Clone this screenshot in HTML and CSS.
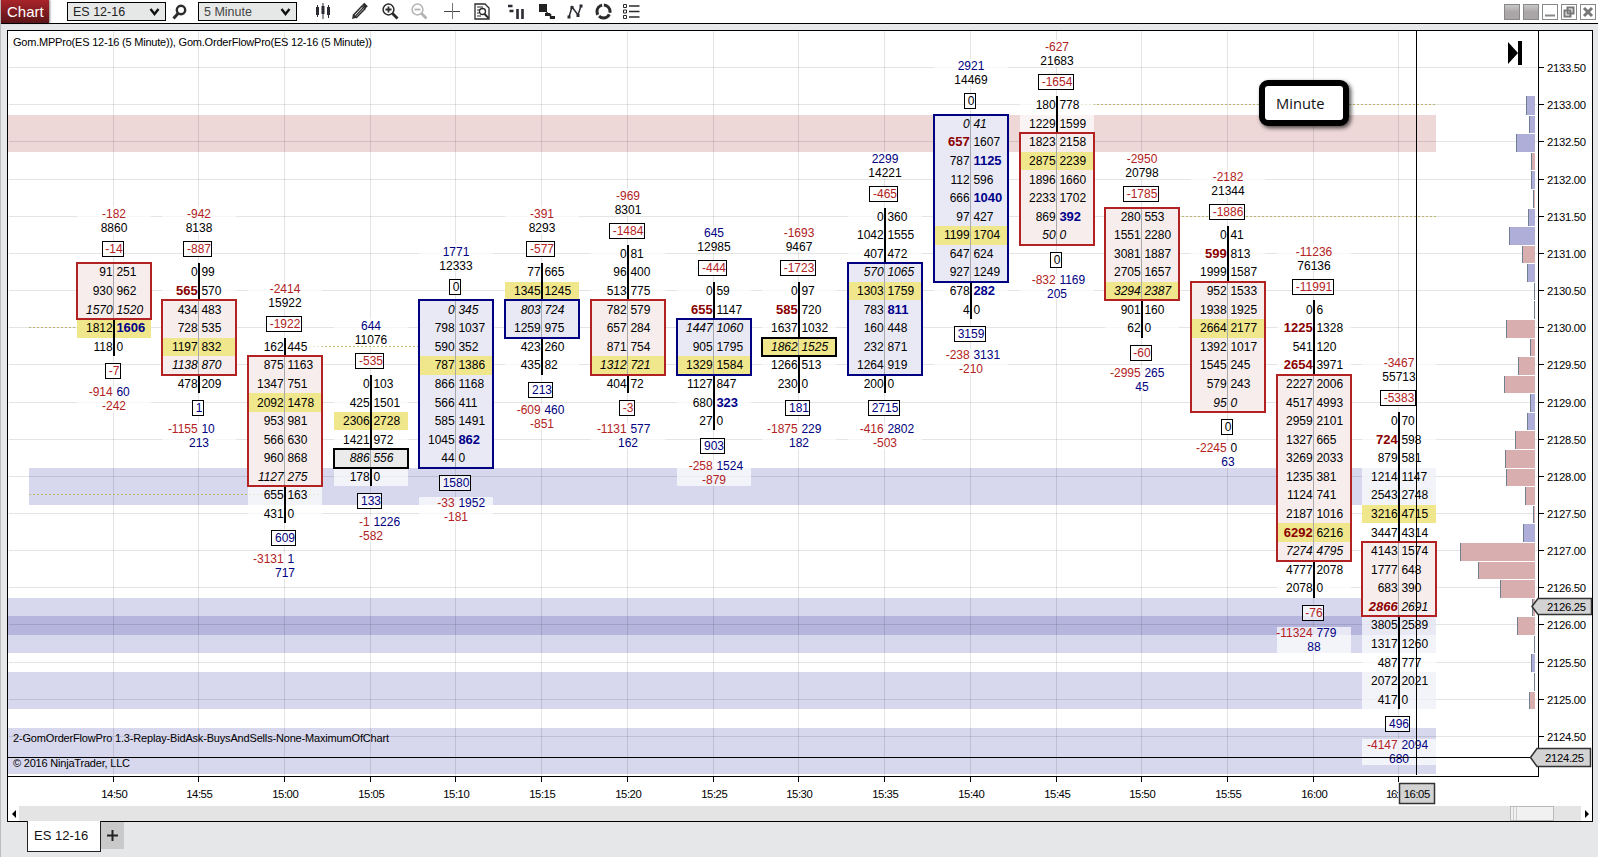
FILE: index.html
```html
<!DOCTYPE html>
<html lang="en">
<head>
<meta charset="utf-8">
<title>Chart - ES 12-16</title>
<link rel="stylesheet" href="styles.css">
</head>
<body>
<div class="window">
  <header class="toolbar">
    <div class="brand">Chart</div>
    <div class="select instrument"><span>ES 12-16</span><svg width="11" height="8" viewBox="0 0 11 8"><path d="M1.5 1l4 5 4-5" fill="none" stroke="#111" stroke-width="2.4"/></svg></div>
    <svg class="icon search" width="16" height="18" viewBox="0 0 16 18"><circle cx="9" cy="7" r="4.2" fill="none" stroke="#2b2b2b" stroke-width="2.4"/><path d="M6 10.5L1.5 15.5" stroke="#2b2b2b" stroke-width="3"/></svg>
    <div class="select interval"><span>5 Minute</span><svg width="11" height="8" viewBox="0 0 11 8"><path d="M1.5 1l4 5 4-5" fill="none" stroke="#111" stroke-width="2.4"/></svg></div>
    <div class="tools">
      <svg width="16" height="18" viewBox="0 0 16 18"><g fill="#2b2b33"><path d="M1 5h3v8H1zM6.500 4h3v8h-3zM12 5h3v8h-3z"/><path d="M2 3h1v12H2zM7.500 1h1v16h-1zM13 3h1v13h-1z"/></g></svg>
      <svg width="18" height="18" viewBox="0 0 18 18"><path d="M2.500 13l8.500-9 3 2.700-8.500 8.800z" fill="#fff" stroke="#2b2b2b" stroke-width="1.500"/><path d="M4.500 14l8-8.500" stroke="#2b2b2b" stroke-width="1.200"/><path d="M11 3l2.300-2.200 3.500 3.400-2.300 2.300z" fill="#2b2b2b"/><path d="M1 17l1-4.500 3.500 3.300z" fill="#2b2b2b"/></svg>
      <svg width="17" height="17" viewBox="0 0 17 17"><circle cx="6.500" cy="6.500" r="5.400" fill="none" stroke="#2b2b2b" stroke-width="1.500"/><path d="M3.500 6.500h6M6.500 3.500v6" stroke="#2b2b2b" stroke-width="1.800"/><path d="M10.500 10.500l5 5" stroke="#2b2b2b" stroke-width="2.800"/></svg>
      <svg width="17" height="17" viewBox="0 0 17 17"><circle cx="6.500" cy="6.500" r="5.400" fill="none" stroke="#b3b3b3" stroke-width="1.500"/><path d="M3.500 6.500h6" stroke="#b3b3b3" stroke-width="1.800"/><path d="M10.500 10.500l5 5" stroke="#b3b3b3" stroke-width="2.800"/></svg>
      <svg width="16" height="16" viewBox="0 0 16 16"><path d="M0 8.500h16" stroke="#444"/><path d="M8.500 0v16" stroke="#777"/></svg>
      <svg width="17" height="17" viewBox="0 0 17 17"><path d="M1 1h10l4 4v11H1z" fill="none" stroke="#2b2b2b" stroke-width="1.300"/><path d="M3 4h6M3 7h3M3 10h2M3 13h4" stroke="#2b2b2b"/><circle cx="8.500" cy="8.500" r="3" fill="#fff" stroke="#2b2b2b" stroke-width="1.300"/><path d="M10.500 11l4 4" stroke="#2b2b2b" stroke-width="2"/></svg>
      <svg width="17" height="17" viewBox="0 0 17 17"><path d="M0 3h4.500M1.500 8h4" stroke="#2b2b33" stroke-width="2.600"/><path d="M9.500 6v10M14.500 6v10" stroke="#2b2b33" stroke-width="2.600"/></svg>
      <svg width="17" height="17" viewBox="0 0 17 17"><path d="M0 1h8v8H0zM6 10h5v3H6zM11 13h5v3h-5z" fill="#222"/><path d="M8 9v2.500h3.500v3h3" fill="none" stroke="#222" stroke-width="1.500"/></svg>
      <svg width="17" height="17" viewBox="0 0 17 17"><path d="M2 14L5 4l6 8 3-9" fill="none" stroke="#2b2b33" stroke-width="1.500"/><path d="M.5 12.500h3v3h-3zM3.500 3h3v3h-3zM9.500 11h3v3h-3zM12.500 1.500h3v3h-3z" fill="#2b2b33"/></svg>
      <svg width="17" height="17" viewBox="0 0 17 17"><circle cx="8.500" cy="8.500" r="6.500" fill="none" stroke="#2b2b2b" stroke-width="3" stroke-dasharray="11.800 1.800" stroke-dashoffset="-3"/></svg>
      <svg width="17" height="17" viewBox="0 0 17 17"><path d="M.5 1.500h3v3h-3zM.5 7h3v3h-3zM.5 12.500h3v3h-3z" fill="none" stroke="#2b2b2b"/><path d="M6 3h10.500M6 8.500h10.500M6 14h10.500" stroke="#2b2b2b" stroke-width="1.600"/></svg>
    </div>
    <div class="controls">
      <i class="ctl solid"></i><i class="ctl solid"></i>
      <i class="ctl"><svg width="14" height="14" viewBox="0 0 14 14"><path d="M2 10.500h10" stroke="#888" stroke-width="2"/></svg></i>
      <i class="ctl"><svg width="14" height="14" viewBox="0 0 14 14"><path d="M5.500 2.500h6v6h-6zM2.500 5.500h6v6h-6z" fill="none" stroke="#777" stroke-width="2"/></svg></i>
      <i class="ctl"><svg width="14" height="14" viewBox="0 0 14 14"><path d="M3 3l8 8M11 3l-8 8" stroke="#777" stroke-width="3"/></svg></i>
    </div>
  </header>
  <main class="panel">
    <svg id="chart" class="chart" width="1584" height="775" viewBox="8 31 1584 775"></svg>
    <div class="scrollbar">
      <span class="arrow"><svg width="6" height="8" viewBox="0 0 6 8"><path d="M5 0v8L1 4z"/></svg></span>
      <span class="thumb"></span>
      <span class="arrow"><svg width="6" height="8" viewBox="0 0 6 8"><path d="M1 0v8l4-4z"/></svg></span>
    </div>
    <div class="callout">Minute</div>
  </main>
  <footer class="tabs">
    <div class="tab">ES 12-16</div>
    <div class="add"><svg width="11" height="11" viewBox="0 0 11 11"><path d="M0 5.500h11M5.500 0v11" stroke="#222" stroke-width="2"/></svg></div>
  </footer>
</div>
<script src="chart.js"></script>
</body>
</html>
```
FILE: styles.css
```css
* { box-sizing: border-box; }
body {
  margin: 0;
  background: #e6e7e9;
  font-family: "Liberation Sans", Arial, sans-serif;
  overflow: hidden;
}
.window {
  width: 1598px;
  height: 857px;
  display: flex;
  flex-direction: column;
  background: #e6e7e9;
  border-left: 1px solid #bcbcbe;
}
.toolbar {
  height: 24px;
  flex: none;
  display: flex;
  align-items: flex-start;
  background: #fff;
  border-bottom: 1px solid #000;
}
.brand {
  width: 48px;
  height: 23px;
  padding-left: 6px;
  color: #fff;
  font-size: 15px;
  line-height: 23px;
  background: linear-gradient(#a8242a, #5c1418);
  box-shadow: 1px 0 2px rgba(0, 0, 0, .5);
}
.select {
  width: 99px;
  height: 19px;
  margin-top: 2px;
  padding: 0 5px;
  display: flex;
  align-items: center;
  justify-content: space-between;
  border: 1px solid #000;
  background: #e6e8e7;
  font-size: 12.5px;
  color: #222;
}
.instrument { margin-left: 18px; }
.interval { margin-left: 10px; color: #444; }
.search { margin: 3px 0 0 6px; }
.tools {
  margin: 2px 0 0 18px;
  display: flex;
  align-items: center;
  height: 18px;
}
.tools svg { margin-right: 12.5px; flex: none; }
.tools svg:nth-child(1) { margin-right: 20px; }
.tools svg:nth-child(4) { margin-right: 16px; }
.tools svg:nth-child(5) { margin-right: 14px; }
.tools svg:nth-child(6) { margin-right: 17px; }
.tools svg:nth-child(7) { margin-right: 14px; }
.tools svg:nth-child(n+8) { margin-right: 11px; }
.controls {
  margin: 4px 2px 0 auto;
  display: flex;
  gap: 3px;
}
.ctl {
  width: 16px;
  height: 16px;
  border: 1px solid #888;
  background: #fff;
  display: block;
}
.ctl svg { display: block; }
.ctl.solid { background: linear-gradient(#c9c7c7, #aaa6a7 50%); }
.panel {
  position: relative;
  width: 1586px;
  height: 792px;
  margin: 6px 0 0 6px;
  flex: none;
  border: 1px solid #000;
  background: #fff;
}
.chart { display: block; }
.scrollbar {
  height: 15px;
  display: flex;
  background: #e4e4e4;
}
.arrow {
  width: 11px;
  background: #fff;
  display: flex;
  align-items: center;
  justify-content: center;
}
.thumb {
  width: 44px;
  margin: 0 27px 0 auto;
  border: 1px solid #bbb;
  background: linear-gradient(90deg, transparent 2px, #ccc 2px 3px, transparent 3px 5px, #ccc 5px 6px, transparent 6px), #f1f1f1;
}
.callout {
  position: absolute;
  left: 1251px;
  top: 49px;
  width: 90px;
  height: 46px;
  border: 6px solid #000;
  border-radius: 9px;
  background: #fff;
  box-shadow: 2px 2px 4px rgba(0, 0, 0, .7);
  font: 14.7px/34px "Open Sans", "Noto Sans", sans-serif;
  padding-left: 11px;
  color: #111;
}
.tabs {
  display: flex;
  margin: -1px 0 0 26px;
  position: relative;
}
.tab {
  width: 74px;
  height: 31px;
  border: 1px solid #222;
  border-top: 0;
  background: #fff;
  padding-left: 6px;
  font-size: 13px;
  line-height: 29px;
  color: #111;
}
.add {
  width: 23px;
  height: 27px;
  margin-top: 1px;
  background: #c9c9c9;
  display: flex;
  align-items: center;
  justify-content: center;
}
.grid { stroke: rgba(0, 0, 0, .105); stroke-width: 1; }
.frame { stroke: #000; stroke-width: 1; fill: none; }
.supply { fill: rgba(139, 0, 0, .157); }
.demand { fill: rgba(0, 0, 139, .157); }
.level { stroke: #bdb76b; stroke-width: 1; stroke-dasharray: 2 2; }
.veil { fill: rgba(255, 255, 255, .7); }
.poc { fill: #f0e68c; }
.wick { fill: #000; }
.spine { fill: #a9a9a9; }
.body { stroke-width: 2; fill: none; }
.body.r { stroke: #b22222; }
.body.b { stroke: #000080; }
.body.k { stroke: #000; }
.fill.r { fill: #f7edec; }
.fill.b { fill: #e9e9f5; }
.fill.k { fill: #ebebeb; }
.tagbox { stroke: #000; stroke-width: 1; fill: rgba(255, 255, 255, .7); }
.chart text { font-size: 12px; fill: #000; }
.chart text.end { text-anchor: end; }
.chart text.mid { text-anchor: middle; }
.chart text.it { font-style: italic; }
.chart text.neg { fill: #b22222; }
.chart text.pos { fill: #000080; }
.chart text.sell { font-weight: bold; font-size: 13px; fill: #8b0000; }
.chart text.buy { font-weight: bold; font-size: 13px; fill: #00008b; }
.chart text.axis { font-size: 11.3px; }
.chart text.note { font-size: 11px; }
.profile.r { fill: #d9aeaf; }
.profile.b { fill: #afaed9; }
.profile-edge { fill: #708090; }
.marker { fill: #d3d3d3; stroke: #333; stroke-width: 1.500; }
```
FILE: chart.js
```js
const NS = 'http://www.w3.org/2000/svg';
const chart = document.getElementById('chart');
const STEP = 18.58;
const yOf = i => 68.07 + i * STEP;
const topOf = i => Math.round(yOf(i) - 9.2);

function add(tag, cls, attrs, text) {
  const e = document.createElementNS(NS, tag);
  if (cls) e.setAttribute('class', cls);
  for (const k in attrs) e.setAttribute(k, attrs[k]);
  if (text !== undefined) e.textContent = text;
  chart.appendChild(e);
  return e;
}
const rect = (cls, x, y, w, h) => add('rect', cls, { x, y, width: w, height: h });
const line = (cls, x1, y1, x2, y2) => add('line', cls, { x1, y1, x2, y2 });
const label = (cls, x, y, s, extra) => add('text', cls, Object.assign({ x, y }, extra), s);
const tone = v => (v[0] === '-' ? ' neg' : v === '0' ? '' : ' pos');

/* px, time, first row, delta, volume, upper tag, rows, body [from, to, colour], poc row, lower tag, min, max, net
   cell prefixes: * strong imbalance, / italic */
const bars = [
  [113, '14:50', 11, '-182', '8860', '-14', '91 251,930 962,/1570 /1520,1812 *1606,118 0', [0, 2, 'r'], 3, '-7', '-914', '60', '-242'],
  [198, '14:55', 11, '-942', '8138', '-887', '0 99,*565 570,434 483,728 535,1197 832,/1138 /870,478 209', [2, 5, 'r'], 4, '1', '-1155', '10', '213'],
  [284, '15:00', 15, '-2414', '15922', '-1922', '162 445,875 1163,1347 751,2092 1478,953 981,566 630,960 868,/1127 /275,655 163,431 0', [1, 7, 'r'], 3, '609', '-3131', '1', '717'],
  [370, '15:05', 17, '644', '11076', '-535', '0 103,425 1501,2306 2728,1421 972,/886 /556,178 0', [4, 4, 'k'], 2, '133', '-1', '1226', '-582'],
  [455, '15:10', 13, '1771', '12333', '0', '/0 /345,798 1037,590 352,787 1386,866 1168,566 411,585 1491,1045 *862,44 0', [0, 8, 'b'], 3, '1580', '-33', '1952', '-181'],
  [541, '15:15', 11, '-391', '8293', '-577', '77 665,1345 1245,/803 /724,1259 975,423 260,435 82', [2, 3, 'b'], 1, '213', '-609', '460', '-851'],
  [627, '15:20', 10, '-969', '8301', '-1484', '0 81,96 400,513 775,782 579,657 284,871 754,/1312 /721,404 72', [3, 6, 'r'], 6, '-3', '-1131', '577', '162'],
  [713, '15:25', 12, '645', '12985', '-444', '0 59,*655 1147,/1447 /1060,905 1795,1329 1584,1127 847,680 *323,27 0', [2, 4, 'b'], 4, '903', '-258', '1524', '-879'],
  [798, '15:30', 12, '-1693', '9467', '-1723', '0 97,*585 720,1637 1032,/1862 /1525,1266 513,230 0', [3, 3, 'k'], 3, '181', '-1875', '229', '182'],
  [884, '15:35', 8, '2299', '14221', '-465', '0 360,1042 1555,407 472,/570 /1065,1303 1759,783 *811,160 448,232 871,1264 919,200 0', [3, 8, 'b'], 4, '2715', '-416', '2802', '-503'],
  [970, '15:40', 3, '2921', '14469', '0', '/0 /41,*657 1607,787 *1125,112 596,666 *1040,97 427,1199 1704,647 624,927 1249,678 *282,4 0', [0, 8, 'b'], 6, '3159', '-238', '3131', '-210'],
  [1056, '15:45', 2, '-627', '21683', '-1654', '180 778,1229 1599,1823 2158,2875 2239,1896 1660,2233 1702,869 *392,/50 /0', [2, 7, 'r'], 3, '0', '-832', '1169', '205'],
  [1141, '15:50', 8, '-2950', '20798', '-1785', '280 553,1551 2280,3081 1887,2705 1657,/3294 /2387,901 160,62 0', [0, 4, 'r'], 4, '-60', '-2995', '265', '45'],
  [1227, '15:55', 9, '-2182', '21344', '-1886', '0 41,*599 813,1999 1587,952 1533,1938 1925,2664 2177,1392 1017,1545 245,579 243,/95 /0', [3, 9, 'r'], 5, '0', '-2245', '0', '63'],
  [1313, '16:00', 13, '-11236', '76136', '-11991', '0 6,*1225 1328,541 120,*2654 3971,2227 2006,4517 4993,2959 2101,1327 665,3269 2033,1235 381,1124 741,2187 1016,*6292 6216,/7274 /4795,4777 2078,2078 0', [4, 13, 'r'], 12, '-76', '-11324', '779', '88'],
  [1398, '16:', 19, '-3467', '55713', '-5383', '0 70,*724 598,879 581,1214 1147,2543 2748,3216 4715,3447 4314,4143 1574,1777 648,683 390,*/2866 /2691,3805 2589,1317 1260,487 777,2072 2021,417 0', [7, 10, 'r'], 5, '496', '-4147', '2094', '680']
];

/* zones, grid and price levels */
rect('supply', 8, 115, 1428, 37);
rect('demand', 29, 468, 1407, 37);
rect('demand', 8, 598, 1428, 55);
rect('demand', 8, 616, 1428, 19);
rect('demand', 8, 672, 1428, 37);
rect('demand', 8, 728, 1428, 46);
for (let i = 0; i <= 36; i += 2) line('grid', 9, Math.round(yOf(i)) - .5, 1537, Math.round(yOf(i)) - .5);
bars.forEach(b => line('grid', b[0] + .5, 31, b[0] + .5, 776));
line('level', 29, 327.5, 77, 327.5);
line('level', 309, 346.500, 419, 346.500);
line('level', 29, 494.500, 322, 494.500);
line('level', 1081, 104.500, 1436, 104.500);
line('level', 1182, 216.500, 1436, 216.500);

function cell(raw, x, y, side) {
  let cls = side === 'l' ? 'end' : '';
  if (raw.includes('*')) cls += side === 'l' ? ' sell' : ' buy';
  if (raw.includes('/')) cls += ' it';
  label(cls, x, y, raw.replace(/[*/]/g, ''));
}
function tag(v, cx, y) {
  const w = [...v].reduce((n, c) => n + (c === '-' ? 4 : 6.67), 0);
  rect('tagbox', Math.round(cx - w / 2 - 3.600) + .5, Math.round(y - 8) + .5, Math.round(w + 4), 15);
  label('mid' + tone(v), cx, Math.round(y + 4), v);
}

bars.forEach(([px, time, first, delta, vol, upper, rowText, body, poc, lower, min, max, net]) => {
  const rows = rowText.split(',').map(r => r.split(' '));
  const x = px - 36, cx = px + 1;
  const y0 = yOf(first), yN = yOf(first + rows.length - 1);
  const top = topOf(first), bottom = topOf(first + rows.length);
  rect('veil', x, top - 56, 74, 27);
  rect('veil', x, top, 74, bottom - top);
  rect('veil', x, Math.round(yN + 39), 74, 26);
  const bt = topOf(first + body[0]), bb = topOf(first + body[1] + 1);
  rect('fill ' + body[2], x, bt, 74, bb - bt);
  rect('poc', x, topOf(first + poc), 74, topOf(first + poc + 1) - topOf(first + poc));
  if (bt > top) rect('wick', px, top, 2, bt - top);
  if (bottom > bb) rect('wick', px, bb, 2, bottom - bb);
  rect('spine', px, bt, 1, bb - bt);
  rect('body ' + body[2], x, bt, 74, bb - bt);
  rows.forEach(([l, r], i) => {
    const y = Math.round(yOf(first + i) + 4);
    cell(l, px - .3, y, 'l');
    cell(r, px + 3.400, y, 'r');
  });
  label('mid' + tone(delta), cx, Math.round(y0 - 54), delta);
  label('mid', cx, Math.round(y0 - 40), vol);
  tag(upper, cx, y0 - 23);
  tag(lower, cx, yN + 24.500);
  label('end' + tone(min), px - .3, Math.round(yN + 49), min);
  label(tone(max), px + 3.400, Math.round(yN + 49), max);
  label('mid' + tone(net), cx, Math.round(yN + 63), net);
});

/* volume profile: left edge and side for each price row */
[[1526, 'b'], [1529, 'b'], [1516, 'b'], [1531, 'r'], [1531, 'b'], [1533, 'r'], [1528, 'b'], [1509, 'b'], [1522, 'r'], [1527, 'b'], [1534, 'b'], [1534, 'r'], [1506, 'r'], [1530, 'r'], [1518, 'r'], [1504, 'r'], [1530, 'b'], [1527, 'b'], [1515, 'r'], [1505, 'r'], [1506, 'r'], [1525, 'r'], [1533, 'r'], [1523, 'b'], [1460, 'r'], [1478, 'r'], [1500, 'r'], [1532, 'r'], [1517, 'r'], [1534, 'b'], [1531, 'b'], [1534, 'r'], [1529, 'r']].forEach(([x, c], i) => {
  const y = topOf(i + 2) + 1 - (i ? 0 : 1), h = topOf(i + 3) - y;
  rect('profile ' + c, x, y, 1535 - x, h);
  rect('profile-edge', x, y, 1, h);
});

/* axes */
line('frame', 1538.500, 31, 1538.500, 777);
line('frame', 8, 776.500, 1539, 776.500);
for (let i = 0; i <= 36; i += 2) {
  const y = Math.round(yOf(i)) - .5;
  line('frame', 1538, y, 1544, y);
  label('axis', 1547, y + 4.500, (2133.5 - i / 4).toFixed(2), { textLength: 39 });
}
bars.forEach(b => {
  line('frame', b[0] + .5, 776, b[0] + .5, 782);
  if (b[1].length === 5) label('axis mid', b[0] + 1.500, 798, b[1], { textLength: 26.500 });
  else label('axis', b[0] - 12, 798, b[1], { textLength: 13 });
});

/* notes */
label('note', 13, 46, 'Gom.MPPro(ES 12-16 (5 Minute)), Gom.OrderFlowPro(ES 12-16 (5 Minute))', { textLength: 359 });
label('note', 13, 742, '2-GomOrderFlowPro 1.3-Replay-BidAsk-BuysAndSells-None-MaximumOfChart', { textLength: 376 });
label('note', 13, 767, '© 2016 NinjaTrader, LLC', { textLength: 117 });

/* crosshair and markers */
line('frame', 1416.500, 31, 1416.500, 775);
line('frame', 8, 757.500, 1531, 757.500);
add('path', 'marker', { d: 'M1532 606.500L1538 598.500H1591.500V614.500H1538Z' });
label('axis', 1547, 611, '2126.25', { textLength: 39 });
add('path', 'marker', { d: 'M1530.500 757.500L1537 748.500H1590.500V766.500H1537Z' });
label('axis', 1545, 762, '2124.25', { textLength: 39 });
add('rect', 'marker', { x: 1399.500, y: 783.500, width: 35, height: 20 });
label('axis mid', 1417, 798, '16:05', { textLength: 26.500 });
add('path', '', { d: 'M1508 42L1518 53 1508 64ZM1518 41h4v24h-4z' });
```
